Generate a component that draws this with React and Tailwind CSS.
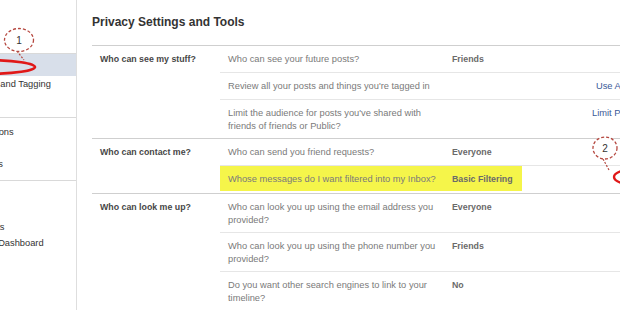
import React from "react";

const sections = [
  {
    label: "Who can see my stuff?",
    rows: [
      { q: "Who can see your future posts?", v: "Friends" },
      { q: "Review all your posts and things you're tagged in", link: "Use Activity Log", lc: "pl-[74px]" },
      { q: "Limit the audience for posts you've shared with friends of friends or Public?", link: "Limit Past Posts", lc: "pl-[70px]" },
    ],
  },
  {
    label: "Who can contact me?",
    rows: [
      { q: "Who can send you friend requests?", v: "Everyone" },
      { q: "Whose messages do I want filtered into my Inbox?", v: "Basic Filtering", hl: true },
    ],
  },
  {
    label: "Who can look me up?",
    rows: [
      { q: "Who can look you up using the email address you provided?", v: "Everyone" },
      { q: "Who can look you up using the phone number you provided?", v: "Friends" },
      { q: "Do you want other search engines to link to your timeline?", v: "No" },
    ],
  },
];

function Row({ r, last }) {
  return (
    <div className={`flex ${last ? "min-h-[26px]" : "min-h-[27px] border-b border-[#e6e6e6]"}`}>
      <div className={`flex w-[302px] shrink-0 ${r.hl ? "bg-[#f5f54a] mb-[2px]" : ""}`}>
        <div className="w-[224px] shrink-0 pl-[8px] pr-[2px] pt-[7px] pb-[5px] text-[9.3px] leading-[13px] text-[#7a7a7a]">
          {r.q}
        </div>
        <div className="flex-1 pl-[8px] pt-[7px] pb-[5px] text-[8.8px] leading-[13px] font-bold text-[#6a6a6a] whitespace-nowrap">
          {r.v}
        </div>
      </div>
      <div className={`flex-1 pt-[7px] pb-[5px] text-[9.3px] leading-[13px] text-[#3b5998] whitespace-nowrap ${r.lc || ""}`}>
        {r.link}
      </div>
    </div>
  );
}

function SideItem({ children }) {
  return (
    <div className="h-[16px] leading-[16px] whitespace-nowrap">
      <span className="block ml-[-37px]">{children}</span>
    </div>
  );
}

export default function App() {
  return (
    <div className="relative w-[620px] h-[310px] overflow-hidden bg-white flex font-['Liberation_Sans',Arial,sans-serif]">
      {/* Sidebar */}
      <div className="w-[77px] shrink-0 h-full border-r border-[#dedede] overflow-hidden text-[9.3px] text-[#333]">
        <div className="pt-[13px] pb-[8px]">
          <SideItem>General</SideItem>
          <SideItem>Security</SideItem>
        </div>
        <div className="border-t border-[#d9d9d9] pb-[9px]">
          <div className="h-[22px] leading-[22px] bg-[#d8dfea] whitespace-nowrap">
            <span className="block ml-[-37px]">Privacy</span>
          </div>
          <SideItem>Timeline and Tagging</SideItem>
          <SideItem>Blocking</SideItem>
        </div>
        <div className="border-t border-[#d9d9d9] pt-[6px] pb-[8px]">
          <SideItem>Notifications</SideItem>
          <SideItem>Mobile</SideItem>
          <SideItem>Followers</SideItem>
        </div>
        <div className="border-t border-[#d9d9d9] pt-[6px]">
          <SideItem>Apps</SideItem>
          <SideItem>Ads</SideItem>
          <SideItem>Payments</SideItem>
          <SideItem>Support Dashboard</SideItem>
        </div>
      </div>

      {/* Main */}
      <div className="flex-1 min-w-0 overflow-hidden pl-[15px]">
        <div className="mt-[14px] h-[16px] leading-[16px] text-[12px] font-bold text-[#333]">
          Privacy Settings and Tools
        </div>
        <div className="mt-[15px] w-[600px] border-b border-[#cfcfcf]">
          {sections.map((s, i) => (
            <div key={i} className="flex border-t border-[#cfcfcf]">
              <div className="w-[128px] shrink-0 pl-[8px] pt-[7px] pb-[5px] text-[8.8px] leading-[13px] font-bold text-[#474747]">
                {s.label}
              </div>
              <div className="flex-1">
                {s.rows.map((r, j) => (
                  <Row key={j} r={r} last={j === s.rows.length - 1} />
                ))}
              </div>
            </div>
          ))}
        </div>
      </div>

      {/* Annotations overlay */}
      <svg className="absolute left-0 top-0 pointer-events-none" width="620" height="310" viewBox="0 0 620 310">
        <ellipse cx="-12" cy="67" rx="47" ry="6.8" fill="none" stroke="#e01818" strokeWidth="2.6" />
        <path d="M17 51 L24 60" stroke="#b5473f" strokeWidth="1.2" strokeDasharray="2 1.5" fill="none" />
        <ellipse cx="19" cy="40" rx="14.5" ry="11.5" fill="#fff" stroke="#b5473f" strokeWidth="1.3" strokeDasharray="3 2" />
        <text x="19" y="44" textAnchor="middle" fontSize="10" fill="#333" fontFamily="Liberation Sans, Arial, sans-serif">1</text>

        <ellipse cx="651" cy="177" rx="37" ry="10" fill="none" stroke="#e01818" strokeWidth="2.4" />
        <path d="M603 159 L609 170" stroke="#b5473f" strokeWidth="1.2" strokeDasharray="2 1.5" fill="none" />
        <ellipse cx="605" cy="148" rx="12" ry="11" fill="#fff" stroke="#b5473f" strokeWidth="1.3" strokeDasharray="3 2" />
        <text x="605" y="152" textAnchor="middle" fontSize="10" fill="#333" fontFamily="Liberation Sans, Arial, sans-serif">2</text>
      </svg>
    </div>
  );
}
